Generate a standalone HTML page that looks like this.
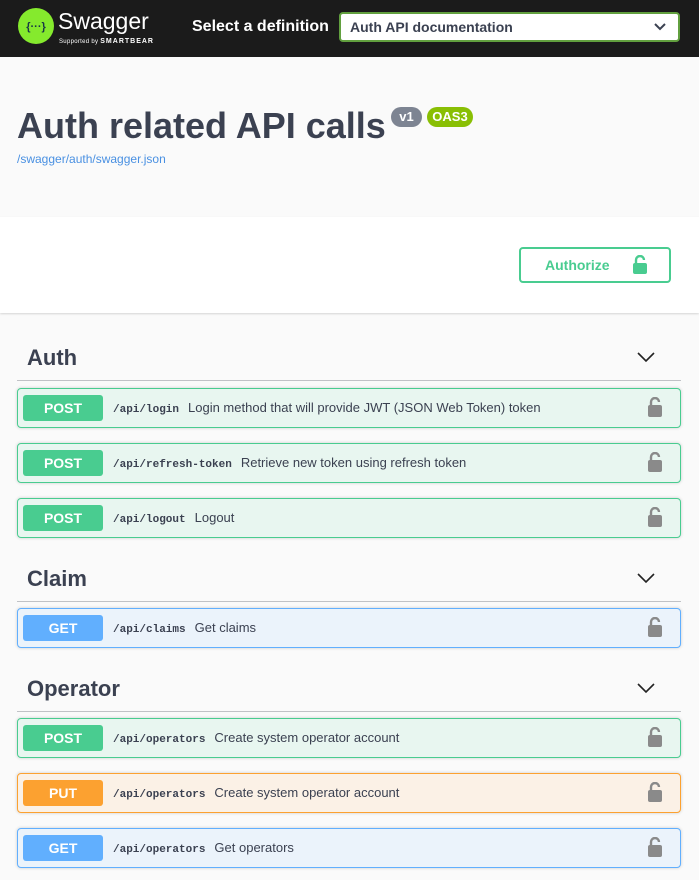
<!DOCTYPE html>
<html><head><meta charset="utf-8"><style>
*{margin:0;padding:0;box-sizing:border-box}
body{width:699px;height:880px;background:#fafafa;font-family:"Liberation Sans",Arial,sans-serif;position:relative;overflow:hidden;color:#3b4151}
.a{position:absolute}
.hdr{left:0;top:0;width:699px;height:57px;background:#1b1b1b}
.info{left:0;top:57px;width:699px;height:160px;background:#fafafa}
.authw{left:0;top:217px;width:699px;height:96px;background:#fff;box-shadow:0 1px 2px rgba(0,0,0,.15)}
.tag{left:17px;width:664px;height:34px;border-bottom:1px solid rgba(59,65,81,.3)}
.tag span{position:absolute;left:10px;top:-2px;font-size:22px;font-weight:bold;color:#3b4151}
.tag svg{position:absolute;right:26px;top:4px}
.op{left:17px;width:664px;height:40px;border:1px solid;border-radius:4px;box-shadow:0 0 3px rgba(0,0,0,.19)}
.post{background:#e8f6f0;border-color:#49cc90}
.get{background:#ebf3fb;border-color:#61affe}
.put{background:#fbf1e6;border-color:#fca130}
.m{position:absolute;left:5px;top:6px;width:80px;height:26px;border-radius:3px;color:#fff;font-weight:bold;font-size:14px;text-align:center;line-height:26px}
.post .m{background:#49cc90}.get .m{background:#61affe}.put .m{background:#fca130}
.p{position:absolute;left:95px;top:0;line-height:38px;font-size:13px;white-space:nowrap}
.p code{font-family:"Liberation Mono",monospace;font-weight:bold;font-size:11px;margin-right:9px}
.lk{position:absolute;right:18px;top:8px}
</style></head><body>
<div class="a hdr">
<svg class="a" style="left:18px;top:8px" width="36" height="36" viewBox="0 0 36 36"><circle cx="18" cy="18" r="18" fill="#85ea2d"/><text x="18" y="22" text-anchor="middle" font-family="Liberation Sans,sans-serif" font-weight="bold" font-size="11" fill="#173647">{···}</text></svg>
<div class="a" style="left:58px;top:8px;color:#fff;font-size:23px">Swagger</div>
<div class="a" style="left:59px;top:38px;color:#fff;font-size:6px;letter-spacing:.3px">Supported by <b style="font-size:7px;letter-spacing:1px">SMARTBEAR</b></div>
<div class="a" style="left:192px;top:18px;color:#fff;font-size:16px;font-weight:bold">Select a definition</div>
<div class="a" style="left:339px;top:12px;width:341px;height:30px;background:#fff;border:2px solid #62a03f;border-radius:4px">
<div class="a" style="left:9px;top:5px;font-size:14px;font-weight:bold;color:#3b4151">Auth API documentation</div>
<svg class="a" style="right:12px;top:8px" width="12" height="10" viewBox="0 0 12 10"><path d="M1 2l5 5 5-5" stroke="#3b4151" stroke-width="2" fill="none"/></svg>
</div>
</div>
<div class="a info">
<div class="a" style="left:17px;top:48px;font-size:36px;font-weight:bold;color:#3b4151">Auth related API calls</div>
<div class="a" style="left:391px;top:50px;width:31px;height:20px;border-radius:10px;background:#7d8492;color:#fff;font-size:13px;font-weight:bold;text-align:center;line-height:20px">v1</div>
<div class="a" style="left:427px;top:50px;width:46px;height:20px;border-radius:10px;background:#89bf04;color:#fff;font-size:13px;font-weight:bold;text-align:center;line-height:20px">OAS3</div>
<div class="a" style="left:17px;top:95px;font-size:12px;color:#4990e2">/swagger/auth/swagger.json</div>
</div>
<div class="a authw">
<div class="a" style="left:519px;top:30px;width:152px;height:36px;border:2px solid #49cc90;border-radius:4px">
<div class="a" style="left:24px;top:8px;font-size:14px;font-weight:bold;color:#49cc90">Authorize</div>
<svg class="a" style="left:111px;top:6px" width="16" height="20" viewBox="0 0 16 20"><path d="M4 9V5a4 4 0 0 1 8 0" stroke="#49cc90" stroke-width="2.4" fill="none"/><rect x="1" y="8" width="14" height="11" rx="2" fill="#49cc90"/></svg>
</div>
</div>

<div class="a tag" style="top:347px"><span>Auth</span><svg width="18" height="12" viewBox="0 0 18 12"><path d="M1 2l8 8 8-8" stroke="#222" stroke-width="1.6" fill="none"/></svg></div>
<div class="a op post" style="top:388px"><div class="m">POST</div><div class="p"><code>/api/login</code>Login method that will provide JWT (JSON Web Token) token</div><svg class="lk" width="14" height="20" viewBox="0 0 14 20"><path d="M3 9V5a4 4 0 0 1 8 0" stroke="#8a8a8a" stroke-width="2.4" fill="none"/><rect x="0" y="8" width="14" height="12" rx="2" fill="#8a8a8a"/></svg></div>
<div class="a op post" style="top:443px"><div class="m">POST</div><div class="p"><code>/api/refresh-token</code>Retrieve new token using refresh token</div><svg class="lk" width="14" height="20" viewBox="0 0 14 20"><path d="M3 9V5a4 4 0 0 1 8 0" stroke="#8a8a8a" stroke-width="2.4" fill="none"/><rect x="0" y="8" width="14" height="12" rx="2" fill="#8a8a8a"/></svg></div>
<div class="a op post" style="top:498px"><div class="m">POST</div><div class="p"><code>/api/logout</code>Logout</div><svg class="lk" width="14" height="20" viewBox="0 0 14 20"><path d="M3 9V5a4 4 0 0 1 8 0" stroke="#8a8a8a" stroke-width="2.4" fill="none"/><rect x="0" y="8" width="14" height="12" rx="2" fill="#8a8a8a"/></svg></div>

<div class="a tag" style="top:568px"><span>Claim</span><svg width="18" height="12" viewBox="0 0 18 12"><path d="M1 2l8 8 8-8" stroke="#222" stroke-width="1.6" fill="none"/></svg></div>
<div class="a op get" style="top:608px"><div class="m">GET</div><div class="p"><code>/api/claims</code>Get claims</div><svg class="lk" width="14" height="20" viewBox="0 0 14 20"><path d="M3 9V5a4 4 0 0 1 8 0" stroke="#8a8a8a" stroke-width="2.4" fill="none"/><rect x="0" y="8" width="14" height="12" rx="2" fill="#8a8a8a"/></svg></div>

<div class="a tag" style="top:678px"><span>Operator</span><svg width="18" height="12" viewBox="0 0 18 12"><path d="M1 2l8 8 8-8" stroke="#222" stroke-width="1.6" fill="none"/></svg></div>
<div class="a op post" style="top:718px"><div class="m">POST</div><div class="p"><code>/api/operators</code>Create system operator account</div><svg class="lk" width="14" height="20" viewBox="0 0 14 20"><path d="M3 9V5a4 4 0 0 1 8 0" stroke="#8a8a8a" stroke-width="2.4" fill="none"/><rect x="0" y="8" width="14" height="12" rx="2" fill="#8a8a8a"/></svg></div>
<div class="a op put" style="top:773px"><div class="m">PUT</div><div class="p"><code>/api/operators</code>Create system operator account</div><svg class="lk" width="14" height="20" viewBox="0 0 14 20"><path d="M3 9V5a4 4 0 0 1 8 0" stroke="#8a8a8a" stroke-width="2.4" fill="none"/><rect x="0" y="8" width="14" height="12" rx="2" fill="#8a8a8a"/></svg></div>
<div class="a op get" style="top:828px"><div class="m">GET</div><div class="p"><code>/api/operators</code>Get operators</div><svg class="lk" width="14" height="20" viewBox="0 0 14 20"><path d="M3 9V5a4 4 0 0 1 8 0" stroke="#8a8a8a" stroke-width="2.4" fill="none"/><rect x="0" y="8" width="14" height="12" rx="2" fill="#8a8a8a"/></svg></div>
</body></html>
